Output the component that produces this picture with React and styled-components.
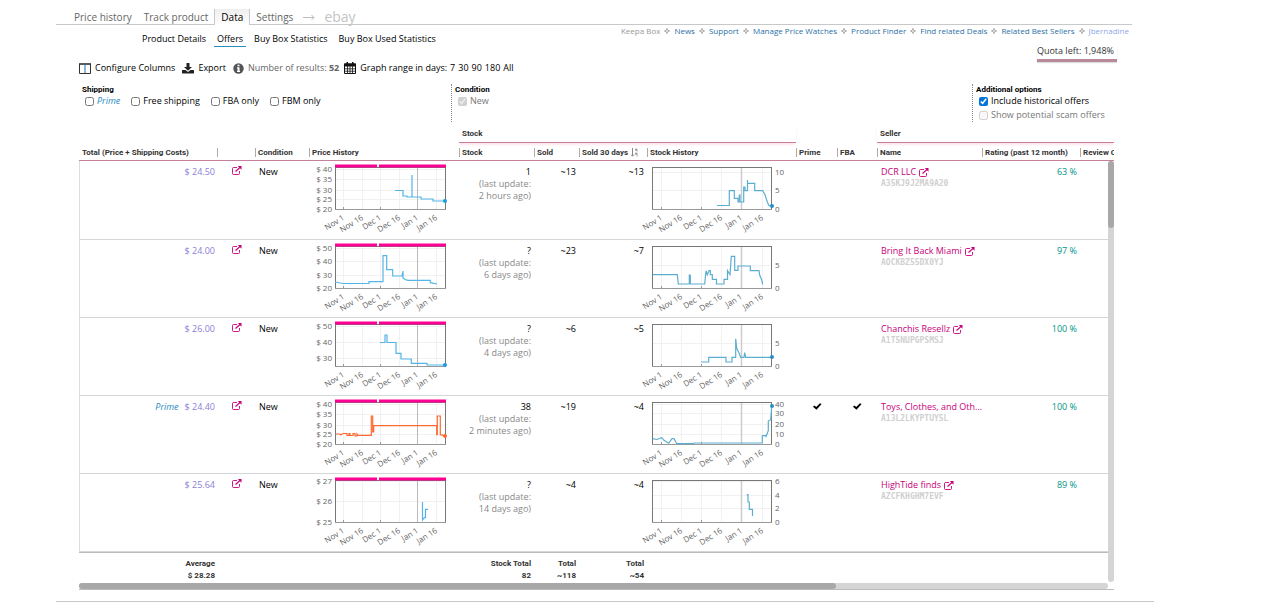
import React from 'react'
import styled, {createGlobalStyle, css} from 'styled-components'

const colors = {
  pink: '#c8007a',
  hotPink: '#ff0095',
  rose: '#c5809b',
  blue: '#2b8cbe',
  link: '#2c6fa6',
  violet: '#8a7fd6',
  green: '#009485',
  line: '#c8c8c8',
  grey: '#888',
  text: '#000',
}

const sans = '"Open Sans", "Noto Sans", sans-serif'
const heading = 'Roboto, sans-serif'

const Global = createGlobalStyle`
  body {
    margin: 0;
    background: #fff;
    color: ${colors.text};
    font-family: ${sans};
    font-size: 9px;
    line-height: 12px;
  }

  a {
    color: inherit;
    text-decoration: none;
  }

  button {
    border: 0;
    padding: 0;
    background: transparent;
    color: inherit;
    font: inherit;
    cursor: pointer;
  }
`

const Page = styled.div`
  padding: 9px 110px 0 56px;
`

const Tabs = styled.nav`
  display: flex;
  align-items: stretch;
  height: 15px;
  margin-right: 22px;
  padding-left: 12px;
  border-bottom: 1px solid ${colors.line};
  font-size: 10px;
  line-height: 16px;
  color: #666;
  white-space: nowrap;
`

const Tab = styled.a`
  padding: 0 6px;

  ${({$active}) =>
    $active &&
    css`
      height: 16px;
      border: solid ${colors.line};
      border-width: 0 1px;
      background: linear-gradient(#eee, #fff);
      color: #000;
    `}
`

const Ebay = styled.a`
  margin-left: 9px;
  font-size: 14px;
  color: #c4c4c4;
`

const Top = styled.div`
  display: flex;
  justify-content: space-between;
  height: 59px;
  margin-right: 22px;
  padding-left: 23px;
  white-space: nowrap;
`

const SubNav = styled.nav`
  display: flex;
  gap: 5px;
  padding: 8px 0 0 60px;
`

const SubLink = styled.a`
  padding: 0 3px 1px;
  border-bottom: 1px solid ${({$active}) => ($active ? colors.blue : 'transparent')};
`

const Toolbar = styled.div`
  display: flex;
  align-items: center;
  margin-top: 15px;
`

const Tool = styled.button`
  display: flex;
  align-items: center;
  gap: 4px;
  margin-right: 7px;
`

const ToolInfo = styled.div`
  display: flex;
  align-items: center;
  gap: 4px;
  margin-right: ${({$muted}) => ($muted ? 5 : 0)}px;
  color: ${({$muted}) => ($muted ? '#666' : '#000')};
`

const Ranges = styled.div`
  display: flex;
  gap: 3px;
  margin-left: 3px;
`

const Side = styled.div`
  display: flex;
  flex-direction: column;
  align-items: flex-end;
`

const SiteLinks = styled.nav`
  display: flex;
  align-items: center;
  gap: 4px;
  padding-right: 3px;
  font-size: 8px;
  color: ${colors.link};

  svg {
    color: #999;
  }
`

const SiteLink = styled.a`
  color: ${({$tone}) => $tone || colors.link};
`

const Quota = styled.div`
  margin: 8px 15px 0 0;
  padding-right: 3px;
  padding-bottom: 2px;
  border-bottom: 3px solid #b98a9c;
  box-shadow: 0 1px 1px #ddd;
  color: #333;
`

const Panel = styled.main`
  padding: 0 40px 0 23px;
`

const Filters = styled.div`
  display: grid;
  grid-template-columns: 372px 1fr 142px;
  height: 38px;
`

const FilterGroup = styled.fieldset`
  min-width: 0;
  margin: 0;
  padding: 0 3px;
  border: 0;
  border-left: 1px ${({$first}) => ($first ? 'none' : 'dotted #888')};
`

const FilterTitle = styled.div`
  font-family: ${heading};
  font-size: 8px;
  font-weight: 700;
  line-height: 11px;
`

const Checks = styled.div`
  display: flex;
  flex-direction: ${({$column}) => ($column ? 'column' : 'row')};
  gap: ${({$column}) => ($column ? 2 : 11)}px;
  padding-left: 3px;
`

const Check = styled.label`
  display: flex;
  align-items: center;
  gap: 3px;
  color: ${({$muted}) => ($muted ? '#777' : '#000')};
  white-space: nowrap;

  input {
    width: 9px;
    height: 9px;
    margin: 0;
    accent-color: #0075d7;
  }
`

const Prime = styled.i`
  color: ${colors.blue};
`

const Grid = styled.div`
  position: relative;
  margin-top: 3px;
  overflow: hidden;
  border-bottom: 1px solid #bbb;
`

const Table = styled.table`
  width: 100%;
  table-layout: fixed;
  border-collapse: separate;
  border-spacing: 0;
`

const GroupHead = styled.th`
  height: 17px;
  padding: 0 3px;
  font-family: ${heading};
  font-size: 8px;
  text-align: left;
  color: #333;

  ${({$filled}) =>
    $filled &&
    css`
      border-bottom: 1px solid ${colors.rose};
      box-shadow: 0 2px 3px -1px #fbd3e3;
    `}
`

const ColumnHead = styled.th`
  height: 15px;
  padding: 2px 0 0;
  border-bottom: 1px solid ${colors.rose};
  font-family: ${heading};
  font-size: 8px;
  line-height: 9px;
  text-align: left;
  color: #333;
  white-space: nowrap;
  overflow: hidden;

  div {
    display: flex;
    gap: 3px;
    padding-left: 2px;
    border-left: 1px solid ${({$first}) => ($first ? 'transparent' : '#aaa')};
  }
`

const Row = styled.tr`
  height: 78px;

  &:first-child {
    height: 79px;
  }
`

const Cell = styled.td`
  padding: 5px 3px 0 4px;
  border-bottom: 1px solid #d4d7da;
  vertical-align: top;
  text-align: ${({$align}) => $align || 'left'};
  white-space: nowrap;

  &:first-child {
    padding-right: 2px;
    border-left: 1px solid #ddd;
  }
`

const ChartCell = styled(Cell)`
  padding: 0;
`

const Price = styled.span`
  margin-left: 6px;
  color: ${colors.violet};
`

const IconLink = styled.a`
  display: block;
  padding-left: 11px;
  line-height: 10px;
  color: ${colors.pink};
`

const Updated = styled.div`
  color: ${colors.grey};
`

const Seller = styled.a`
  display: flex;
  align-items: center;
  gap: 3px;
  color: ${colors.pink};
`

const SellerId = styled.div`
  font-family: 'DejaVu Sans Mono', monospace;
  font-size: 8px;
  font-weight: 700;
  color: #d0d0d0;
`

const Rating = styled.span`
  color: ${colors.green};
`

const FootCell = styled.td`
  height: 26px;
  padding: 4px 3px 0;
  border-top: 1px solid #bbb;
  font-family: ${heading};
  font-size: 8px;
  font-weight: 700;
  text-align: right;
  color: #333;

  &:first-child {
    padding-right: 2px;
  }
`

const ChartSvg = styled.svg`
  display: block;
  overflow: visible;
  font-family: ${sans};
  font-size: 8px;
  fill: #666;
`

const ScrollY = styled.div`
  position: absolute;
  top: 36px;
  right: 0;
  bottom: 7px;
  width: 6px;
  border-radius: 3px;
  background: #d5d5d5;
`

const ThumbY = styled.div`
  height: 67px;
  border-radius: 3px;
  background: #a8a8a8;
`

const ScrollX = styled.div`
  height: 6px;
  margin-right: 6px;
  border-radius: 3px;
  background: #d5d5d5;
`

const ThumbX = styled.div`
  width: 73.6%;
  height: 6px;
  border-radius: 3px;
  background: #a8a8a8;
`

const PageEnd = styled.div`
  margin-top: 11px;
  border-top: 1px solid ${colors.line};
`

const ArrowSvg = styled.svg`
  align-self: center;
  margin-left: 4px;
`

const ExternalIcon = () => (
  <svg width="10" height="9" viewBox="0 0 10 9" fill="none" stroke="currentColor">
    <path d="M5 1.5H1.5Q.5 1.5.5 2.5v5q0 1 1 1h5q1 0 1-1V5" strokeWidth=".9" />
    <path d="M3.5 5.5 8 1.5" strokeWidth="1.2" />
    <path d="M5.8 0H9.5v3.7z" fill="currentColor" stroke="none" />
  </svg>
)

const ArrowIcon = () => (
  <ArrowSvg width="12" height="6" viewBox="0 0 12 6" fill="none" stroke="#bbb">
    <path d="M0 3.5H11M8.5 1 11 3.500 8.500 6" />
  </ArrowSvg>
)

const ColumnsIcon = () => (
  <svg width="12" height="11" viewBox="0 0 12 11" fill="none" stroke="#333">
    <path d="M.5 1v9.500h11V1" />
    <path d="M0 1h12" strokeWidth="1.600" />
    <path d="M6 1v9" stroke="#2b6fae" />
  </svg>
)

const ExportIcon = () => (
  <svg width="12" height="11" viewBox="0 0 12 11" fill="#222">
    <path d="M4.500 0h3v4H10L6 7.800 2 4h2.500z" />
    <path d="M.5 7h3L6 9l2.500-2h3q.5 0 .5.5v2.500q0 .5-.5.5H.5Q0 10.500 0 10V7.500Q0 7 .5 7z" />
  </svg>
)

const InfoIcon = () => (
  <svg width="11" height="11" viewBox="0 0 11 11">
    <circle cx="5.500" cy="5.500" r="5.200" fill="#555" />
    <path d="M4.500 1.700h2v1.600h-2zM4 4.300h2.500v3.400H7v1.200H4V7.700h.6V5.400H4z" fill="#fff" />
  </svg>
)

const CalendarIcon = () => (
  <svg width="12" height="12" viewBox="0 0 12 12">
    <path d="M.5 2h11v9.500H.5z" fill="#fff" stroke="#111" />
    <path d="M0 1.500h12v3H0zM2.500 0h1.500v2H2.500zM8 0h1.500v2H8z" fill="#111" />
    <path d="M3.500 4v7.500M6 4v7.500M8.500 4v7.500M1 6.800h10M1 9.200h10" stroke="#111" strokeWidth=".8" />
  </svg>
)

const SortIcon = () => (
  <svg width="7" height="9" viewBox="0 0 7 9" fill="none" stroke="#888">
    <path d="M1.500 0v8M0 6.500l1.500 1.700L3 6.500" />
    <path d="M4.500 1h1.500v2.500M4.500 1v1.200h1.500M4.500 5h1.500v3.500M4.500 5v1.200h1.500" strokeWidth=".8" />
  </svg>
)

const CheckIcon = () => (
  <svg width="9" height="7" viewBox="0 0 9 7" fill="#000">
    <path d="M0 3.700 1.500 2.400 3.200 4 7 .2 8.600 1 3.500 6.800z" />
  </svg>
)

const StarIcon = () => (
  <svg width="6" height="6" viewBox="0 0 7 7" fill="none" stroke="currentColor">
    <path d="M3.500.5 4.300 2.700 6.500 3.500 4.300 4.300 3.500 6.500 2.700 4.300.5 3.500 2.700 2.700z" />
  </svg>
)

const months = ['Nov 1', 'Nov 16', 'Dec 1', 'Dec 16', 'Jan 1', 'Jan 16']

const chartTypes = {
  price: {left: 26, right: 137, ticks: [34, 53, 71, 90, 108, 127], labelX: 23, stroke: '#55b5e8', dot: '#1c9be6'},
  stock: {left: 5, right: 125, ticks: [14, 34, 54, 74, 94, 115], labelX: 128, stroke: '#5caed0', dot: '#2490c4'},
}

const Chart = ({type, axis, line, dot, color}) => {
  const {left, right, ticks, labelX, stroke, dot: dotColor} = chartTypes[type]
  const isPrice = type === 'price'

  return (
    <ChartSvg width="148" height="77" viewBox="0 0 148 77">
      <path
        d={ticks.map(x => `M${x + 0.5} 7v41`).join('') + axis.map(([, y]) => `M${left} ${y}.5H${right}`).join('')}
        stroke="#f1f1f1"
      />
      <path
        d={`M${ticks[4] + 0.5} 7v41`}
        stroke={isPrice ? '#bbb' : '#ccc'}
        strokeWidth={isPrice ? 1 : 1.5}
      />
      <rect x={left + 0.5} y="6.5" width={right - left - 1} height="42" fill="none" stroke="#777" />
      <path d={`M${left} 48.500H${right}M${ticks[0] + 0.5} 46v2M${ticks[2] + 0.5} 46v2`} stroke="#999" />
      {isPrice && (
        <path d={`M${left} 5H${left + 42}M${left + 44} 5H${right}`} stroke={colors.hotPink} strokeWidth="3" />
      )}
      <path d={line} fill="none" stroke={color || stroke} strokeWidth="1.2" />
      {dot && <circle cx={dot[0]} cy={dot[1]} r="2" fill={color || dotColor} />}
      {axis.map(([label, y]) => (
        <text key={label} x={labelX} y={y + 3} textAnchor={isPrice ? 'end' : 'start'}>
          {label}
        </text>
      ))}
      {months.map((month, i) => (
        <text key={month} transform={`translate(${ticks[i] + 2} 58) rotate(-32)`} textAnchor="end">
          {month}
        </text>
      ))}
    </ChartSvg>
  )
}

const offers = [
  {
    price: '$ 24.50',
    stock: '1',
    updated: '2 hours ago',
    sold: '~13',
    sold30: '~13',
    seller: 'DCR LLC',
    id: 'A35KJ9J2MA9A20',
    rating: '63 %',
    priceChart: {
      axis: [['$ 40', 8], ['$ 35', 18], ['$ 30', 29], ['$ 25', 38], ['$ 20', 48]],
      line: 'M86 29.500H94V35H98V36H103V14V36H112V38H124V40H136',
      dot: [136, 40],
    },
    stockChart: {
      axis: [['10', 11], ['5', 29], ['0', 48]],
      line:
        'M70 44.500H82.300V29.700H87.300V37.300H91V41H92.300V34H93V41H96.700V26H98V29.700H100.500V19V22.300H107.700V29.700H115.700L118 33.700L120.300 41L122 44.700H125',
      dot: [125, 45],
    },
  },
  {
    price: '$ 24.00',
    stock: '?',
    updated: '6 days ago',
    sold: '~23',
    sold30: '~7',
    seller: 'Bring It Back Miami',
    id: 'AOCKBZ55DX0YJ',
    rating: '97 %',
    priceChart: {
      axis: [['$ 50', 8], ['$ 40', 21], ['$ 30', 35], ['$ 20', 48]],
      line:
        'M26 42L34 43.500H60V41.700H74V15.700H77.700V29.700H83.700V36H93L94 31V38L96 39.500L99 40.300H121.300V42.700L128 44',
    },
    stockChart: {
      axis: [['5', 25], ['0', 48]],
      line:
        'M5.700 34.700H30.300L31.300 44H42.300V35H43.300V44H57.700L59 30.700L60.300 34.700L62 30.700H63.300V34.700H65.300V39.300H69.500V44H77V39.300H80.500V30.700L83 34.700L84.300 16.300H87.700V30.300H91V26H103.300V30.700H112L112.700 35L114.700 40L115.700 44.500',
    },
  },
  {
    price: '$ 26.00',
    stock: '?',
    updated: '4 days ago',
    sold: '~6',
    sold30: '~5',
    seller: 'Chanchis Resellz',
    id: 'A1T5NUPGPSMSJ',
    rating: '100 %',
    priceChart: {
      axis: [['$ 50', 8], ['$ 40', 24], ['$ 30', 40]],
      line: 'M71 24.500H76V17H78V24.500H87V35.300H92V41H102.300V45.300H118V47H136',
      dot: [136, 47],
    },
    stockChart: {
      axis: [['5', 25], ['0', 48]],
      line:
        'M54 44H61.700V39.300H79V44H85V39.300H88.700V20.700L89.700 30.300L91.700 34.300L93.700 39.300H97L97.700 34.700L98.700 39.300H125',
      dot: [125, 39],
    },
  },
  {
    prime: true,
    price: '$ 24.40',
    stock: '38',
    updated: '2 minutes ago',
    sold: '~19',
    sold30: '~4',
    seller: 'Toys, Clothes, and Oth...',
    noLink: true,
    id: 'A13L2LKYPTUY5L',
    rating: '100 %',
    priceChart: {
      color: '#ff6a33',
      axis: [['$ 40', 8], ['$ 35', 18], ['$ 30', 29], ['$ 25', 38], ['$ 20', 48]],
      line:
        'M27 38H31L32 39L34 37.500H38V39.500H40V37.500H41V39.500H44V37.500H46V40H48V38L49 39.300H62.300V20H63.700V36H64.700V29.700H127.700V38.700H128.300V20H131.300V38.700L136 40',
      dot: [136, 40],
    },
    stockChart: {
      axis: [['40', 8], ['30', 17], ['20', 28], ['10', 38], ['0', 48]],
      line:
        'M5.700 42.700L9.700 43.500L14.700 41.700L17 44.300L21.700 47.300L25 42.700H27L29.700 47.700H46.300L47 47H115.300V39.700H118.300L119 40.500L121.300 34.700V25L123.700 23.700L124.700 10.300',
      dot: [125, 10],
    },
  },
  {
    price: '$ 25.64',
    stock: '?',
    updated: '14 days ago',
    sold: '~4',
    sold30: '~4',
    seller: 'HighTide finds',
    id: 'AZCFKHGHM7EVF',
    rating: '89 %',
    priceChart: {
      axis: [['$ 27', 7], ['$ 26', 27], ['$ 25', 48]],
      line: 'M113.500 28V46L115.300 43.700H116.500V35.300H119',
    },
    stockChart: {
      axis: [['6', 7], ['4', 21], ['2', 34], ['0', 48]],
      line: 'M99.700 20.700H101V28H102.300V35.300H105.500V42',
    },
  },
]

const columns = [
  {label: 'Total (Price + Shipping Costs)', width: 138},
  {label: '', width: 38},
  {label: 'Condition', width: 54},
  {label: 'Price History', width: 150},
  {label: 'Stock', width: 75},
  {label: 'Sold', width: 45},
  {label: 'Sold 30 days', width: 68, sorted: true},
  {label: 'Stock History', width: 149},
  {label: 'Prime', width: 41},
  {label: 'FBA', width: 40},
  {label: 'Name', width: 105},
  {label: 'Rating (past 12 month)', width: 98},
  {label: 'Review Count'},
]

const siteLinks = [
  ['Keepa Box', '#999'],
  ['News'],
  ['Support'],
  ['Manage Price Watches'],
  ['Product Finder'],
  ['Find related Deals'],
  ['Related Best Sellers'],
  ['Jbernadine', '#8fa8e8'],
]

const OfferRow = ({offer}) => (
  <Row>
    <Cell $align="right">
      {offer.prime && <Prime>Prime</Prime>}
      <Price>{offer.price}</Price>
    </Cell>
    <Cell>
      <IconLink href="#offer" aria-label="Open offer">
        <ExternalIcon />
      </IconLink>
    </Cell>
    <Cell>New</Cell>
    <ChartCell>
      <Chart type="price" {...offer.priceChart} />
    </ChartCell>
    <Cell $align="right">
      {offer.stock}
      <Updated>
        (last update:
        <br />
        {offer.updated})
      </Updated>
    </Cell>
    <Cell $align="right">{offer.sold}</Cell>
    <Cell $align="right">{offer.sold30}</Cell>
    <ChartCell>
      <Chart type="stock" {...offer.stockChart} />
    </ChartCell>
    <Cell $align="center">{offer.prime && <CheckIcon />}</Cell>
    <Cell $align="center">{offer.prime && <CheckIcon />}</Cell>
    <Cell>
      <Seller href="#seller">
        {offer.seller}
        {!offer.noLink && <ExternalIcon />}
      </Seller>
      <SellerId>{offer.id}</SellerId>
    </Cell>
    <Cell $align="right">
      <Rating>{offer.rating}</Rating>
    </Cell>
    <Cell />
  </Row>
)

const OffersTable = () => (
  <Grid>
    <Table>
      <colgroup>
        {columns.map(({label, width}) => (
          <col key={label} width={width} />
        ))}
      </colgroup>
      <thead>
        <tr>
          <GroupHead colSpan={4} />
          <GroupHead colSpan={4} $filled>
            Stock
          </GroupHead>
          <GroupHead colSpan={2} />
          <GroupHead colSpan={3} $filled>
            Seller
          </GroupHead>
        </tr>
        <tr>
          {columns.map(({label, sorted}, i) => (
            <ColumnHead key={label} $first={i === 0}>
              <div>
                {label || '\u00a0'}
                {sorted && <SortIcon />}
              </div>
            </ColumnHead>
          ))}
        </tr>
      </thead>
      <tbody>
        {offers.map(offer => (
          <OfferRow key={offer.id} offer={offer} />
        ))}
      </tbody>
      <tfoot>
        <tr>
          <FootCell>
            Average
            <br />$ 28.28
          </FootCell>
          <FootCell colSpan={3} />
          <FootCell>
            Stock Total
            <br />
            82
          </FootCell>
          <FootCell>
            Total
            <br />
            ~118
          </FootCell>
          <FootCell>
            Total
            <br />
            ~54
          </FootCell>
          <FootCell colSpan={6} />
        </tr>
      </tfoot>
    </Table>
    <ScrollX>
      <ThumbX />
    </ScrollX>
    <ScrollY>
      <ThumbY />
    </ScrollY>
  </Grid>
)

const App = () => (
  <>
    <Global />
    <Page>
      <Tabs>
        <Tab href="#history">Price history</Tab>
        <Tab href="#track">Track product</Tab>
        <Tab href="#data" $active>
          Data
        </Tab>
        <Tab href="#settings">Settings</Tab>
        <ArrowIcon />
        <Ebay href="#ebay">ebay</Ebay>
      </Tabs>
      <Top>
        <div>
          <SubNav>
            <SubLink href="#details">Product Details</SubLink>
            <SubLink href="#offers" $active>
              Offers
            </SubLink>
            <SubLink href="#buybox">Buy Box Statistics</SubLink>
            <SubLink href="#used">Buy Box Used Statistics</SubLink>
          </SubNav>
          <Toolbar>
            <Tool>
              <ColumnsIcon />
              Configure Columns
            </Tool>
            <Tool>
              <ExportIcon />
              Export
            </Tool>
            <ToolInfo $muted>
              <InfoIcon />
              <span>
                Number of results: <b>52</b>
              </span>
            </ToolInfo>
            <ToolInfo>
              <CalendarIcon />
              Graph range in days:
            </ToolInfo>
            <Ranges>
              {['7', '30', '90', '180', 'All'].map(range => (
                <button key={range}>{range}</button>
              ))}
            </Ranges>
          </Toolbar>
        </div>
        <Side>
          <SiteLinks>
            {siteLinks.map(([label, tone], i) => (
              <React.Fragment key={label}>
                {i > 0 && <StarIcon />}
                <SiteLink href="#link" $tone={tone}>
                  {label}
                </SiteLink>
              </React.Fragment>
            ))}
          </SiteLinks>
          <Quota>Quota left: 1,948%</Quota>
        </Side>
      </Top>
      <Panel>
        <Filters>
          <FilterGroup $first>
            <FilterTitle>Shipping</FilterTitle>
            <Checks>
              <Check>
                <input type="checkbox" />
                <Prime>Prime</Prime>
              </Check>
              <Check>
                <input type="checkbox" />
                Free shipping
              </Check>
              <Check>
                <input type="checkbox" />
                FBA only
              </Check>
              <Check>
                <input type="checkbox" />
                FBM only
              </Check>
            </Checks>
          </FilterGroup>
          <FilterGroup>
            <FilterTitle>Condition</FilterTitle>
            <Checks>
              <Check $muted>
                <input type="checkbox" defaultChecked disabled />
                New
              </Check>
            </Checks>
          </FilterGroup>
          <FilterGroup>
            <FilterTitle>Additional options</FilterTitle>
            <Checks $column>
              <Check>
                <input type="checkbox" defaultChecked />
                Include historical offers
              </Check>
              <Check $muted>
                <input type="checkbox" disabled />
                Show potential scam offers
              </Check>
            </Checks>
          </FilterGroup>
        </Filters>
        <OffersTable />
      </Panel>
      <PageEnd />
    </Page>
  </>
)

export default App
